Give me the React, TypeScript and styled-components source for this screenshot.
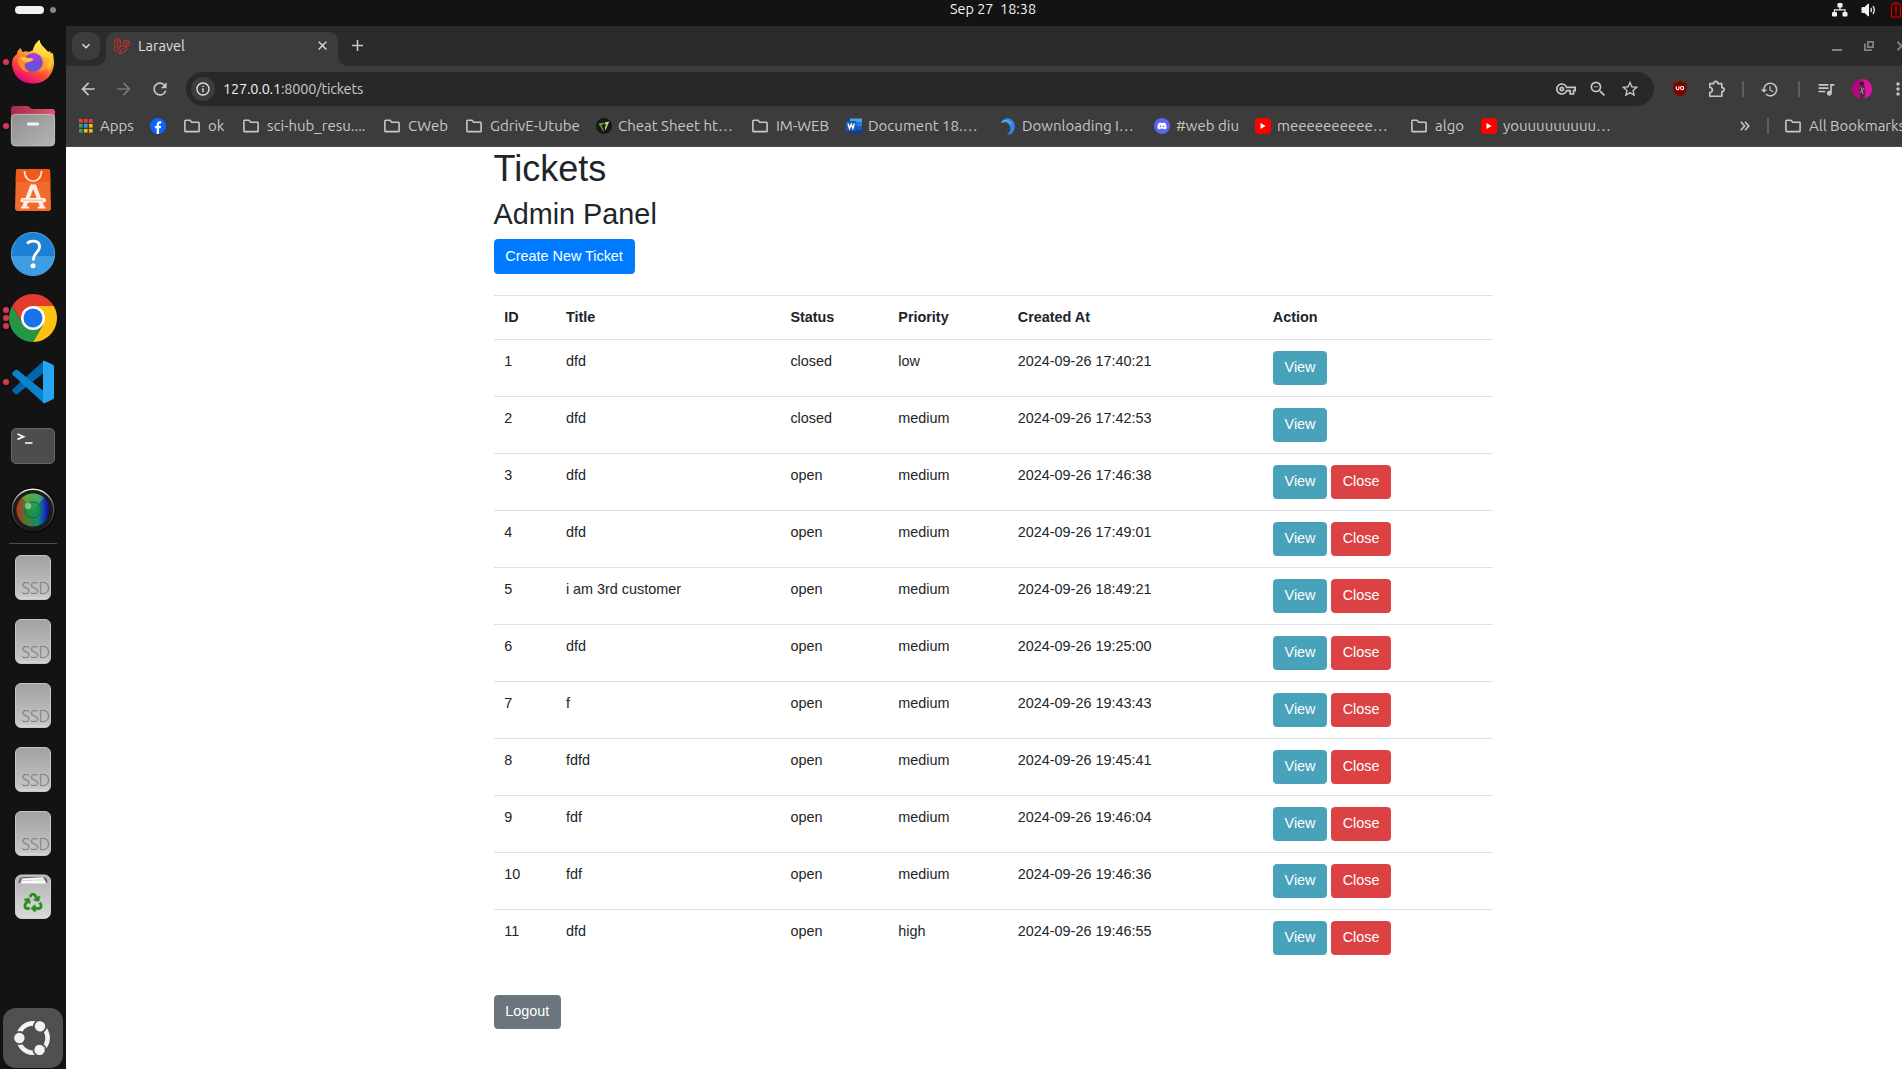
import React from "react";
import styled, { createGlobalStyle } from "styled-components";
import {
  MdArrowBack,
  MdArrowForward,
  MdRefresh,
  MdOutlineInfo,
  MdOutlineVpnKey,
  MdZoomOut,
  MdStarBorder,
  MdHistory,
  MdQueueMusic,
  MdMoreVert,
  MdClose,
  MdAdd,
  MdKeyboardArrowDown,
} from "react-icons/md";
import { SiLaravel } from "react-icons/si";
import { FaDiscord, FaRecycle } from "react-icons/fa";

const GlobalStyle = createGlobalStyle`
  *, *::before, *::after { box-sizing: border-box; }
  html, body { margin: 0; padding: 0; overflow: hidden; background: #131313; }
  svg { display: block; flex: none; }
`;

const uiFont = `Ubuntu, "Noto Sans", "Open Sans", sans-serif`;
const pageFont = `"Liberation Sans", Arial, sans-serif`;

const Desktop = styled.div`
  width: 1902px;
  height: 1069px;
  overflow: hidden;
  display: grid;
  grid-template-columns: 1902px;
  grid-template-rows: 26px 1fr;
  background: #131313;
  font-family: ${uiFont};
`;

const TopBar = styled.header`
  display: grid;
  grid-template-columns: 950px 1fr auto;
  align-items: start;
  color: #f2f2f2;
`;

const Workspaces = styled.div`
  display: flex;
  align-items: center;
  gap: 6px;
  padding: 6px 0 0 15px;
`;
const ActiveWorkspace = styled.span`
  width: 29px;
  height: 8px;
  border-radius: 4px;
  background: #f2f2f2;
`;
const OtherWorkspace = styled.span`
  width: 6px;
  height: 6px;
  border-radius: 50%;
  background: #868686;
`;
const Clock = styled.time`
  font-size: 14.4px;
  line-height: 18px;
  white-space: pre;
`;
const Tray = styled.div`
  display: flex;
  align-items: center;
  gap: 13px;
  height: 20px;
  width: 70px;
`;

const Workarea = styled.div`
  display: grid;
  grid-template-columns: 66px 1854px;
  min-height: 0;
`;

const Dock = styled.nav`
  display: flex;
  flex-direction: column;
  padding-top: 4px;
`;
const DockItem = styled.div`
  height: 64px;
  display: grid;
  grid-template-columns: 9px 48px 9px;
  align-items: center;
  flex: none;
`;
const Pips = styled.div`
  display: flex;
  flex-direction: column;
  align-items: flex-end;
  gap: 2px;
`;
const Pip = styled.span`
  width: 6px;
  height: 6px;
  border-radius: 50%;
  background: #db3651;
`;
const DockRule = styled.div`
  width: 48px;
  height: 1px;
  margin: 1px 9px 1px;
  background: #4b4b4b;
  flex: none;
`;
const Drive = styled.div`
  width: 36px;
  height: 45px;
  margin-left: 6px;
  border-radius: 6px;
  border: 1px solid #c6c6c6;
  background: linear-gradient(#a2a2a2, #c4c4c4 92%, #d8d8d8);
  display: flex;
  align-items: flex-end;
  justify-content: flex-end;
  font-size: 16.5px;
  font-weight: 300;
  line-height: 21px;
  color: #808080;
`;
const ShowApps = styled.div`
  width: 60px;
  height: 60px;
  margin: auto 3px 1px;
  border-radius: 13px;
  background: #505050;
  display: grid;
  place-items: center;
  flex: none;
`;

const BrowserWindow = styled.main`
  display: grid;
  grid-template-rows: 40px 46px 35px 1fr;
  min-height: 0;
  background: #3c3c3c;
  color: #c7c7c7;
`;
const TabStrip = styled.div`
  display: flex;
  padding: 6px 0 0 6px;
  background: #2b2b2b;
`;
const TabSearch = styled.button`
  width: 28px;
  height: 28px;
  padding: 0;
  border: 0;
  border-radius: 10px;
  background: #3c3c3c;
  color: #e3e3e3;
  display: grid;
  place-items: center;
`;
const Tab = styled.div`
  position: relative;
  width: 232px;
  height: 34px;
  margin-left: 6px;
  padding: 0 8px 7px;
  border-radius: 9px 9px 0 0;
  background: #3c3c3c;
  display: flex;
  align-items: center;
  gap: 8px;
  color: #e0e0e0;
  &::before,
  &::after {
    content: "";
    position: absolute;
    bottom: 0;
    width: 10px;
    height: 10px;
  }
  &::before {
    left: -10px;
    background: radial-gradient(circle at 0 0, transparent 9.5px, #3c3c3c 10px);
  }
  &::after {
    right: -10px;
    background: radial-gradient(circle at 100% 0, transparent 9.5px, #3c3c3c 10px);
  }
`;
const TabTitle = styled.span`
  flex: 1;
  font-size: 14.6px;
  line-height: 17px;
`;
const NewTab = styled.div`
  margin-left: 10px;
  height: 27px;
  display: flex;
  align-items: center;
`;
const WindowControls = styled.div`
  display: flex;
  align-items: center;
  margin-left: auto;
  width: 88px;
  height: 28px;
  gap: 22px;
  color: #808080;
`;

const Toolbar = styled.div`
  display: flex;
  align-items: center;
  padding: 0 8px 0 12px;
`;
const NavButtons = styled.div`
  display: flex;
  width: 108px;
  gap: 16px;
`;
const NavButton = styled.span<{ $muted?: boolean }>`
  color: ${(p) => (p.$muted ? "#777" : "#c7c7c7")};
`;
const AddressBar = styled.div`
  width: 1468px;
  height: 34px;
  border-radius: 17px;
  background: #282828;
  display: flex;
  align-items: center;
  padding: 0 14px 0 5px;
`;
const SiteInfo = styled.span`
  width: 24px;
  height: 24px;
  border-radius: 50%;
  background: #3c3c3c;
  color: #e3e3e3;
  display: grid;
  place-items: center;
`;
const Url = styled.span`
  flex: 1;
  padding-left: 8px;
  font-size: 14.5px;
  line-height: 18px;
  letter-spacing: -0.2px;
  color: #c9c9c9;
  b {
    font-weight: 400;
    color: #f0f0f0;
  }
`;
const AddressActions = styled.div`
  display: flex;
  gap: 12px;
`;
const Extensions = styled.div`
  display: flex;
  align-items: center;
  padding-left: 19px;
`;
const Slot = styled.span<{ $w: number }>`
  width: ${(p) => p.$w}px;
  display: flex;
  flex: none;
  align-items: center;
`;
const Bar = styled.span`
  width: 2px;
  height: 16px;
  background: #5e5e5e;
`;
const Avatar = styled.span`
  width: 20px;
  height: 20px;
  border-radius: 50%;
  overflow: hidden;
`;

const BookmarksBar = styled.div`
  display: flex;
  align-items: center;
  padding: 0 0 6px 13px;
  border-bottom: 1px solid #4a4a4a;
`;
const Bookmark = styled.div<{ $w: number; $gap?: number }>`
  display: flex;
  align-items: center;
  flex: none;
  gap: ${(p) => p.$gap ?? 8}px;
  width: ${(p) => p.$w}px;
`;
const BookmarkName = styled.span`
  font-size: 15px;
  line-height: 20px;
  white-space: nowrap;
`;
const YouTubeTile = styled.span`
  width: 16px;
  height: 16px;
  border-radius: 4px;
  background: #f00;
  display: grid;
  place-items: center;
  flex: none;
`;

const Page = styled.section`
  background: #fff;
  color: #212529;
  font-family: ${pageFont};
  font-size: 14.4px;
  line-height: 21.6px;
`;
const Container = styled.div`
  width: 999px;
  margin: 0 auto;
`;
const Heading = styled.h1`
  margin: 0 0 7.2px;
  font-size: 36px;
  font-weight: 400;
  line-height: 43.2px;
`;
const Subheading = styled.h2`
  margin: 0 0 7.04px;
  font-size: 28.8px;
  font-weight: 400;
  line-height: 34.56px;
`;
const tones = { primary: "#007bff", info: "#48a2b9", danger: "#dc4144", secondary: "#6c757d" };
const Button = styled.button<{ $tone: keyof typeof tones; $large?: boolean }>`
  height: ${(p) => (p.$large ? 35 : 34)}px;
  padding: ${(p) => (p.$large ? "5px 11.2px 0 10.8px" : "4px 10.4px 0 10.8px")};
  border: 1px solid ${(p) => tones[p.$tone]};
  border-radius: 3.6px;
  background: ${(p) => tones[p.$tone]};
  color: #fff;
  font: inherit;
  line-height: 22px;
  display: flex;
  align-items: flex-start;
  flex: none;
`;
const Table = styled.table`
  width: 999px;
  margin: 21px 0 29px;
  table-layout: fixed;
  border-collapse: separate;
  border-spacing: 0;
`;
const HeadCell = styled.th<{ $w: number }>`
  width: ${(p) => p.$w}px;
  height: 44px;
  padding: 11px 10.8px 0;
  border-top: 1px solid #dee2e6;
  text-align: left;
  vertical-align: top;
`;
const Cell = styled.td`
  height: 57px;
  padding: 11px 10.8px 0;
  border-top: 1px solid #dee2e6;
  vertical-align: top;
`;
const Actions = styled.div`
  display: flex;
  gap: 4px;
`;

const FolderIcon = () => (
  <svg width="16" height="14" viewBox="0 0 16 14" fill="none" stroke="#c7c7c7" strokeWidth="1.6" strokeLinejoin="round">
    <path d="M.9 12V2Q.9 1.3 1.6 1.3H6L7.7 3.2H14.4Q15.1 3.2 15.1 3.9V11.9Q15.1 12.6 14.4 12.6H1.6Q.9 12.6.9 12Z" />
  </svg>
);

const AppsIcon = () => {
  const colors = ["#ea4335", "#ea4335", "#ea4335", "#34a853", "#2a9df4", "#fbbc04", "#34a853", "#fbbc04", "#fbbc04"];
  return (
    <svg width="14" height="14" viewBox="0 0 14 14">
      {colors.map((c, i) => (
        <rect key={i} x={(i % 3) * 5} y={Math.floor(i / 3) * 5} width="3.6" height="3.6" fill={c} />
      ))}
    </svg>
  );
};

const FacebookIcon = () => (
  <svg width="16" height="16" viewBox="0 0 16 16">
    <circle cx="8" cy="8" r="8" fill="#0866ff" />
    <path d="M6.7 16V10.3H4.9V7.9H6.7V6.7C6.7 4.4 7.8 3.2 9.9 3.2C10.4 3.2 11 3.3 11.3 3.4V5.5H10.2C9.3 5.5 9 5.9 9 6.8V7.9H11.2L10.8 10.3H9V16Z" fill="#fff" />
  </svg>
);

const CheatIcon = () => (
  <svg width="16" height="16" viewBox="0 0 16 16">
    <circle cx="8" cy="8" r="8" fill="#18181c" />
    <path d="M2.5 5.7L8 4.4L7.3 6.6L5 7L8.4 13L6.8 12.4Z" fill="#6fae1a" />
    <path d="M9 4.2L13.3 3.5L9.4 12.6L8.8 9.8L10.5 6L8.5 6.6Z" fill="#b8dc7c" />
  </svg>
);

const WordIcon = () => (
  <svg width="16" height="16" viewBox="0 0 16 16">
    <path d="M4 .5H16V4.5H4Z" fill="#41a5ee" />
    <path d="M4 4.3H16V8H4Z" fill="#2b7cd3" />
    <path d="M4 8H16V12H4Z" fill="#185abd" />
    <path d="M4 11.8H16V15.5H4Z" fill="#103f91" />
    <rect y="3" width="10.5" height="10" rx="1" fill="#185abd" />
    <path d="M2 5.5L3.5 10.4L5.2 6.2L6.9 10.4L8.4 5.5" fill="none" stroke="#fff" strokeWidth="1.4" />
  </svg>
);

const SwirlIcon = () => (
  <svg width="16" height="18" viewBox="0 0 16 20">
    <path d="M.3 7C2 1 8 .2 11.5 2.4C16.5 6 17.2 14 12 18.2C9.5 19.8 7.4 19.6 6.8 19C11 17 11.8 12 8.5 8C6 5.4 3 5.4.3 7Z" fill="#2f88e8" />
    <path d="M1 6C4 2.5 9 4 11.5 7.6" stroke="#5bb2ff" strokeWidth="1.4" fill="none" />
  </svg>
);

const DiscordIcon = () => (
  <svg width="16" height="16" viewBox="0 0 16 16">
    <circle cx="8" cy="8" r="8" fill="#5865f2" />
    <FaDiscord x="3" y="3" width="10" height="10" size={10} color="#fff" />
  </svg>
);

const YouTubeIcon = () => (
  <YouTubeTile>
    <svg width="6" height="6" viewBox="0 0 6 6">
      <path d="M.5 0L5.6 3L.5 6Z" fill="#fff" />
    </svg>
  </YouTubeTile>
);

const FirefoxIcon = () => (
  <svg width="48" height="48" viewBox="0 0 48 48">
    <defs>
      <linearGradient id="ffBody" x1=".8" y1=".05" x2=".3" y2="1">
        <stop offset="0" stopColor="#fff44f" />
        <stop offset=".35" stopColor="#ffb02e" />
        <stop offset=".65" stopColor="#ff4f3a" />
        <stop offset="1" stopColor="#e3007f" />
      </linearGradient>
      <radialGradient id="ffGlobe" cx=".6" cy=".1" r=".95">
        <stop offset="0" stopColor="#b03ae8" />
        <stop offset=".5" stopColor="#7a48dc" />
        <stop offset="1" stopColor="#4f5fd8" />
      </radialGradient>
      <linearGradient id="ffFlame" x1=".5" y1="0" x2=".5" y2="1">
        <stop offset="0" stopColor="#fff04a" />
        <stop offset="1" stopColor="#ffb52b" />
      </linearGradient>
    </defs>
    <path d="M8 16C8 13 10 11 12 10C12 12 13 13 14 14C16 13 18 13 20 14L24 12C25 7 28 4 30.5 2C31 7 35 9 39 14L41 13L42 16C43.5 13 44.5 16 45 24C45 37 36 45.5 24 45.5C12 45.5 3 37 3 25C3 21 5 18 8 16Z" fill="url(#ffBody)" />
    <path d="M24 13C25 7 28 4 30.5 2C31 7 35 9 39 14C44 20 44 28 39 33C38 25 34 16 24 13Z" fill="url(#ffFlame)" />
    <circle cx="24.3" cy="24.3" r="9.4" fill="url(#ffGlobe)" />
    <path d="M9 20C13 17 16 19 18 20C21 20 24 20 24.5 22C22 24 18 24 16 26C15 29 16.5 32 20 34C13 34 8 27 9 20Z" fill="#ff8a2a" />
    <path d="M11 20C15 18 17 19.5 19 20C22 20 24 20 24 22C21 24 17 24 14 23Z" fill="#ffc33c" />
    <path d="M28 16C32 17 34 20 34.5 25C34 29 31 32 28 33C36 34 41 28 40 21Z" fill="#ffa62b" opacity=".7" />
  </svg>
);

const FilesIcon = () => (
  <svg width="48" height="48" viewBox="0 0 48 48">
    <defs>
      <linearGradient id="flBack" x1="0" x2="1">
        <stop offset="0" stopColor="#a52b45" />
        <stop offset="1" stopColor="#e55670" />
      </linearGradient>
      <linearGradient id="flFront" x1="0" y1="0" x2="1" y2="1">
        <stop offset="0" stopColor="#8f8f8f" />
        <stop offset="1" stopColor="#b5b5b5" />
      </linearGradient>
    </defs>
    <path d="M2 30V7Q2 4 5 4H18Q20 4 21 5.5Q22 7 24 7H43Q46 7 46 10V30Z" fill="url(#flBack)" />
    <rect x="2.4" y="12.4" width="43.2" height="31.5" rx="4" fill="url(#flFront)" stroke="#bdbdbd" />
    <rect x="18" y="20.5" width="12" height="3" rx="1" fill="#f4f4f4" />
  </svg>
);

const StoreIcon = () => (
  <svg width="48" height="48" viewBox="0 0 48 48">
    <path d="M9.5 3H38.5Q41 3 41.1 5L42 42Q42 45 39 45H9Q6 45 6 42L7 5Q7 3 9.5 3Z" fill="#f26b2c" />
    <path d="M9.5 3H38.5Q41 3 41.1 5L41.4 16H6.7L7 5Q7 3 9.5 3Z" fill="#ee5a1c" />
    <path d="M15.5 5C15.5 18.5 32.5 18.5 32.5 5" stroke="#fbe3d8" strokeWidth="1.8" fill="none" />
    <path d="M15.2 41L23 20.5H25.5L33.2 41" stroke="#fff1ea" strokeWidth="4" fill="none" />
    <rect x="11.5" y="32" width="25.5" height="4.5" rx="2.2" fill="#fff1ea" />
    <path d="M12 41.5H20M28.8 41.5H36.4" stroke="#fff1ea" strokeWidth="2.2" />
    <path d="M14 34.2H34" stroke="#f4a27c" strokeWidth=".8" />
  </svg>
);

const HelpIcon = () => (
  <svg width="48" height="48" viewBox="0 0 48 48">
    <circle cx="24" cy="24" r="22" fill="#1f80d3" />
    <path d="M2.2 26H45.8A22 22 0 0 1 2.2 26Z" fill="#3f9ee3" />
    <circle cx="24" cy="24" r="21.6" fill="none" stroke="#56a9e8" strokeWidth=".8" />
    <path d="M18.3 13.6C20.5 10.3 30.6 9.4 30.6 16.8C30.6 22.6 24.3 22 24.3 30.5" stroke="#fff" strokeWidth="2.8" fill="none" />
    <circle cx="24" cy="35.8" r="2.5" fill="#fff" />
  </svg>
);

const ChromeIcon = () => (
  <svg width="48" height="48" viewBox="0 0 48 48">
    <path d="M24 12H44.78A24 24 0 0 1 24 48L34.4 30Z" fill="#fcc112" />
    <path d="M13.6 30L3.22 12A24 24 0 0 0 24 48L34.4 30Z" fill="#249747" />
    <path d="M24 12H44.78A24 24 0 0 0 3.22 12L13.6 30Z" fill="#e33b2e" />
    <circle cx="24" cy="24" r="12" fill="#fff" />
    <circle cx="24" cy="24" r="9.5" fill="#1a73e8" />
  </svg>
);

const CodeIcon = () => (
  <svg width="48" height="48" viewBox="0 0 48 48">
    <path d="M34.5 3L3.6 31.2Q2.6 32.3 3.6 33.4L6.3 35.9Q7.4 36.7 8.5 35.9L34.5 15Z" fill="#0067ad" />
    <path d="M34.5 45L3.6 16.8Q2.6 15.7 3.6 14.6L6.3 12.1Q7.4 11.3 8.5 12.1L34.5 33Z" fill="#0a84cf" />
    <path d="M34 45.2V2.8Q35 2.5 36 3L44 6.8Q45 7.4 45 8.5V39.5Q45 40.6 44 41.2L36 45Q35 45.5 34 45.2Z" fill="#27a5f2" />
  </svg>
);

const TerminalIcon = () => (
  <svg width="48" height="48" viewBox="0 0 48 48">
    <rect x="2.5" y="6.5" width="43" height="35" rx="4.5" fill="#4d4d4d" stroke="#666" />
    <path d="M8.5 12L14.5 14.7L8.5 17.4M16 21H23.5" stroke="#fff" strokeWidth="1.7" fill="none" />
  </svg>
);

const LensIcon = () => (
  <svg width="48" height="48" viewBox="0 0 48 48">
    <defs>
      <linearGradient id="lnGlass">
        <stop offset="0" stopColor="#c03020" />
        <stop offset=".3" stopColor="#4d7a2b" />
        <stop offset=".65" stopColor="#158a7a" />
        <stop offset=".88" stopColor="#1526c0" />
        <stop offset="1" stopColor="#0a0f5e" />
      </linearGradient>
      <linearGradient id="lnRim" x1="0" y1="0" x2="0" y2="1">
        <stop offset="0" stopColor="#f0f0f0" />
        <stop offset=".35" stopColor="#666" />
        <stop offset="1" stopColor="#1a1a1a" />
      </linearGradient>
      <radialGradient id="lnCore">
        <stop offset="0" stopColor="#1f9f3f" />
        <stop offset="1" stopColor="#0b8a5c" stopOpacity="0" />
      </radialGradient>
    </defs>
    <circle cx="24" cy="24" r="22.8" fill="#050505" />
    <circle cx="24" cy="24" r="20.8" fill="#1c1c1c" stroke="url(#lnRim)" strokeWidth="1.4" />
    <circle cx="24" cy="24" r="16.6" fill="url(#lnGlass)" />
    <path d="M13 11.8A16.3 16.3 0 0 1 35 11.8L24 24Z" fill="#6fbf5a" opacity=".55" />
    <circle cx="24" cy="24" r="12" fill="url(#lnCore)" />
    <circle cx="24" cy="24" r="8" fill="none" stroke="#0d6f45" strokeWidth="1" />
    <circle cx="19" cy="20" r="3.2" fill="#b7ddb0" opacity=".65" />
  </svg>
);

const TrashIcon = () => (
  <svg width="48" height="48" viewBox="0 0 48 48">
    <defs>
      <linearGradient id="trBody" x1="0" y1="0" x2="0" y2="1">
        <stop offset="0" stopColor="#b3b3b3" />
        <stop offset="1" stopColor="#dadada" />
      </linearGradient>
    </defs>
    <rect x="6.5" y="2" width="35" height="43.5" rx="6" fill="url(#trBody)" stroke="#d0d0d0" />
    <path d="M9.5 10Q9.5 4 14 4H34Q38.5 4 38.5 10Z" fill="#6a6a6a" />
    <path d="M11.5 10.6L13 5.4L34 4.2L37.5 10.6Z" fill="#fafafa" />
    <path d="M13 7.6L35 6.8" stroke="#bbb" strokeWidth=".7" />
    <FaRecycle x="14.5" y="20" width="19" height="19" size={19} color="#26901b" stroke="#26901b" strokeWidth={16} />
  </svg>
);

const UbuntuIcon = () => (
  <svg width="40" height="40" viewBox="-20 -20 40 40">
    <circle r="14.6" fill="none" stroke="#f2f2f2" strokeWidth="4.6" />
    {[180, 301, 61].map((deg) => (
      <g key={deg} transform={`rotate(${deg}) translate(13.6 0)`}>
        <circle r="7" fill="#505050" />
        <circle r="5.2" fill="#f2f2f2" />
      </g>
    ))}
  </svg>
);

const NetworkIcon = () => (
  <svg width="16" height="14" viewBox="0 0 16 14" fill="#f2f2f2">
    <rect x="5.5" y="0" width="5" height="4.4" rx="1" />
    <rect x="0" y="9" width="5" height="4.4" rx="1" />
    <rect x="10.5" y="9" width="5" height="4.4" rx="1" />
    <path d="M8 4V7M2.5 9.5V6.8H13V9.5" stroke="#f2f2f2" strokeWidth="1.2" fill="none" />
  </svg>
);
const VolumeIcon = () => (
  <svg width="16" height="14" viewBox="0 0 16 14" fill="none" stroke="#f2f2f2">
    <path d="M1 4.5H3.5L7.5 1V13L3.5 9.5H1Z" fill="#f2f2f2" />
    <path d="M9.8 4.8Q11.2 7 9.8 9.2M12 3Q14.6 7 12 11" strokeWidth="1.3" />
  </svg>
);
const BatteryIcon = () => (
  <svg width="11" height="16" viewBox="-1 0 11 16">
    <path d="M3.2 1.6V.6H6.8V1.6" stroke="#d00000" fill="none" />
    <rect x=".6" y="2" width="8.8" height="13.2" rx="1.2" fill="#240404" stroke="#d00000" strokeWidth="1.2" />
    <path d="M5 4V10M5 11.5V13.2" stroke="#d00000" strokeWidth="1.5" />
  </svg>
);

const ShieldIcon = () => (
  <svg width="14" height="16" viewBox="0 0 14 16">
    <path d="M7 0Q10 2 13.8 2V7Q13.6 13 7 16Q.4 13 .2 7V2Q4 2 7 0Z" fill="#800000" />
    <path d="M3.3 5.2V7.5Q3.3 8.7 4.6 8.7T6 7.5V5.2M8 8.2Q6.8 7 8 5.7Q9.4 5.2 10.4 5.9Q11 7.2 10.2 8.3Q9 9.1 8 8.2Z" stroke="#fff" strokeWidth="1.1" fill="none" />
  </svg>
);
const PuzzleIcon = () => (
  <svg width="18" height="18" viewBox="0 0 18 18" fill="none" stroke="#c7c7c7" strokeWidth="1.6" strokeLinejoin="round">
    <path d="M1.8 3.6H5.8Q5.8 1.4 7.8 1.4T9.8 3.6H13.8V7.6Q16.2 7.6 16.2 9.6T13.8 11.6V16.2H1.8V12.6Q4.4 12 4.4 9.9T1.8 7.2Z" />
  </svg>
);
const PortraitIcon = () => (
  <svg width="20" height="20" viewBox="0 0 20 20">
    <rect width="20" height="20" fill="#d00c90" />
    <path d="M0 0H9L6 20H0Z" fill="#b0087c" />
    <path d="M12 0H20V20H14Z" fill="#e012a0" />
    <path d="M7.5 7Q10 5.5 12.5 7L13.2 14L12 20H8L7 14Z" fill="#4a2c48" />
    <circle cx="10" cy="4.6" r="2" fill="#2a1626" />
    <path d="M9 8L11 15M12 9L8 14" stroke="#b58ba8" strokeWidth="1" />
  </svg>
);
const MinimizeIcon = () => (
  <svg width="10" height="12" viewBox="0 0 10 12">
    <rect y="9" width="10" height="2" fill="#808080" />
  </svg>
);
const RestoreIcon = () => (
  <svg width="10" height="10" viewBox="0 0 10 10" fill="none" stroke="#808080" strokeWidth="1.8">
    <rect x="3.9" y=".9" width="5.2" height="5.2" />
    <path d="M.9 2.5V9.1H7.8" />
  </svg>
);
const CloseWindowIcon = () => (
  <svg width="12" height="10" viewBox="0 0 12 10" fill="none" stroke="#808080" strokeWidth="2">
    <path d="M1.5 .8L9.9 9.2M9.9 .8L1.5 9.2" />
  </svg>
);
const OverflowIcon = () => (
  <svg width="10" height="10" viewBox="0 0 10 10" fill="none" stroke="#c7c7c7" strokeWidth="1.6">
    <path d="M.8.8L4.6 5L.8 9.2M5 .8L8.8 5L5 9.2" />
  </svg>
);

const apps: { icon: React.ReactNode; windows: number }[] = [
  { icon: <FirefoxIcon />, windows: 1 },
  { icon: <FilesIcon />, windows: 1 },
  { icon: <StoreIcon />, windows: 0 },
  { icon: <HelpIcon />, windows: 0 },
  { icon: <ChromeIcon />, windows: 3 },
  { icon: <CodeIcon />, windows: 1 },
  { icon: <TerminalIcon />, windows: 0 },
  { icon: <LensIcon />, windows: 0 },
];

const bookmarks: { icon: React.ReactNode; name?: string; width: number; gap?: number }[] = [
  { icon: <AppsIcon />, name: "Apps", width: 71, gap: 7 },
  { icon: <FacebookIcon />, width: 34 },
  { icon: <FolderIcon />, name: "ok", width: 59 },
  { icon: <FolderIcon />, name: "sci-hub_resu....", width: 141 },
  { icon: <FolderIcon />, name: "CWeb", width: 82 },
  { icon: <FolderIcon />, name: "GdrivE-Utube", width: 130 },
  { icon: <CheatIcon />, name: "Cheat Sheet ht…", width: 156, gap: 6 },
  { icon: <FolderIcon />, name: "IM-WEB", width: 94 },
  { icon: <WordIcon />, name: "Document 18.…", width: 154, gap: 6 },
  { icon: <SwirlIcon />, name: "Downloading I…", width: 154, gap: 6 },
  { icon: <DiscordIcon />, name: "#web diu", width: 101, gap: 6 },
  { icon: <YouTubeIcon />, name: "meeeeeeeeee…", width: 156, gap: 6 },
  { icon: <FolderIcon />, name: "algo", width: 70 },
  { icon: <YouTubeIcon />, name: "youuuuuuuuu…", width: 259, gap: 6 },
];

const columns = [
  { name: "ID", width: 61.6 },
  { name: "Title", width: 224.5 },
  { name: "Status", width: 107.9 },
  { name: "Priority", width: 119.5 },
  { name: "Created At", width: 255 },
  { name: "Action", width: 230.5 },
];

const tickets = [
  [1, "dfd", "closed", "low", "2024-09-26 17:40:21"],
  [2, "dfd", "closed", "medium", "2024-09-26 17:42:53"],
  [3, "dfd", "open", "medium", "2024-09-26 17:46:38"],
  [4, "dfd", "open", "medium", "2024-09-26 17:49:01"],
  [5, "i am 3rd customer", "open", "medium", "2024-09-26 18:49:21"],
  [6, "dfd", "open", "medium", "2024-09-26 19:25:00"],
  [7, "f", "open", "medium", "2024-09-26 19:43:43"],
  [8, "fdfd", "open", "medium", "2024-09-26 19:45:41"],
  [9, "fdf", "open", "medium", "2024-09-26 19:46:04"],
  [10, "fdf", "open", "medium", "2024-09-26 19:46:36"],
  [11, "dfd", "open", "high", "2024-09-26 19:46:55"],
];

export default function App() {
  return (
    <Desktop>
      <GlobalStyle />
      <TopBar>
        <Workspaces>
          <ActiveWorkspace />
          <OtherWorkspace />
        </Workspaces>
        <Clock>{"Sep 27  18:38"}</Clock>
        <Tray>
          <NetworkIcon />
          <VolumeIcon />
          <BatteryIcon />
        </Tray>
      </TopBar>
      <Workarea>
        <Dock>
          {apps.map((app, i) => (
            <DockItem key={i}>
              <Pips>
                {Array.from({ length: app.windows }, (_, n) => (
                  <Pip key={n} />
                ))}
              </Pips>
              {app.icon}
            </DockItem>
          ))}
          <DockRule />
          {Array.from({ length: 5 }, (_, i) => (
            <DockItem key={i}>
              <span />
              <Drive>SSD</Drive>
            </DockItem>
          ))}
          <DockItem>
            <span />
            <TrashIcon />
          </DockItem>
          <ShowApps>
            <UbuntuIcon />
          </ShowApps>
        </Dock>
        <BrowserWindow>
          <TabStrip>
            <TabSearch>
              <MdKeyboardArrowDown size={16} />
            </TabSearch>
            <Tab>
              <SiLaravel size={16} color="#d8322c" stroke="#d8322c" strokeWidth={0.5} />
              <TabTitle>Laravel</TabTitle>
              <MdClose size={15} />
            </Tab>
            <NewTab>
              <MdAdd size={19} />
            </NewTab>
            <WindowControls>
              <MinimizeIcon />
              <RestoreIcon />
              <CloseWindowIcon />
            </WindowControls>
          </TabStrip>
          <Toolbar>
            <NavButtons>
              <NavButton>
                <MdArrowBack size={20} />
              </NavButton>
              <NavButton $muted>
                <MdArrowForward size={20} />
              </NavButton>
              <NavButton>
                <MdRefresh size={20} />
              </NavButton>
            </NavButtons>
            <AddressBar>
              <SiteInfo>
                <MdOutlineInfo size={16} />
              </SiteInfo>
              <Url>
                <b>127.0.0.1</b>:8000/tickets
              </Url>
              <AddressActions>
                <MdOutlineVpnKey size={20} />
                <MdZoomOut size={20} />
                <MdStarBorder size={20} />
              </AddressActions>
            </AddressBar>
            <Extensions>
              <Slot $w={35}>
                <ShieldIcon />
              </Slot>
              <Slot $w={34}>
                <PuzzleIcon />
              </Slot>
              <Slot $w={18}>
                <Bar />
              </Slot>
              <Slot $w={38}>
                <MdHistory size={19} />
              </Slot>
              <Slot $w={18}>
                <Bar />
              </Slot>
              <Slot $w={36}>
                <MdQueueMusic size={20} />
              </Slot>
              <Slot $w={36}>
                <Avatar>
                  <PortraitIcon />
                </Avatar>
              </Slot>
              <MdMoreVert size={20} />
            </Extensions>
          </Toolbar>
          <BookmarksBar>
            {bookmarks.map((b, i) => (
              <Bookmark key={i} $w={b.width} $gap={b.gap}>
                {b.icon}
                {b.name && <BookmarkName>{b.name}</BookmarkName>}
              </Bookmark>
            ))}
            <Slot $w={27}>
              <OverflowIcon />
            </Slot>
            <Slot $w={18}>
              <Bar />
            </Slot>
            <Bookmark $w={120}>
              <FolderIcon />
              <BookmarkName>All Bookmarks</BookmarkName>
            </Bookmark>
          </BookmarksBar>
          <Page>
            <Container>
              <Heading>Tickets</Heading>
              <Subheading>Admin Panel</Subheading>
              <Button $tone="primary" $large>
                Create New Ticket
              </Button>
              <Table>
                <thead>
                  <tr>
                    {columns.map((c) => (
                      <HeadCell key={c.name} $w={c.width}>
                        {c.name}
                      </HeadCell>
                    ))}
                  </tr>
                </thead>
                <tbody>
                  {tickets.map((t) => (
                    <tr key={t[0]}>
                      {t.map((value, i) => (
                        <Cell key={i}>{value}</Cell>
                      ))}
                      <Cell>
                        <Actions>
                          <Button $tone="info">View</Button>
                          {t[2] === "open" && <Button $tone="danger">Close</Button>}
                        </Actions>
                      </Cell>
                    </tr>
                  ))}
                </tbody>
              </Table>
              <Button $tone="secondary">Logout</Button>
            </Container>
          </Page>
        </BrowserWindow>
      </Workarea>
    </Desktop>
  );
}
